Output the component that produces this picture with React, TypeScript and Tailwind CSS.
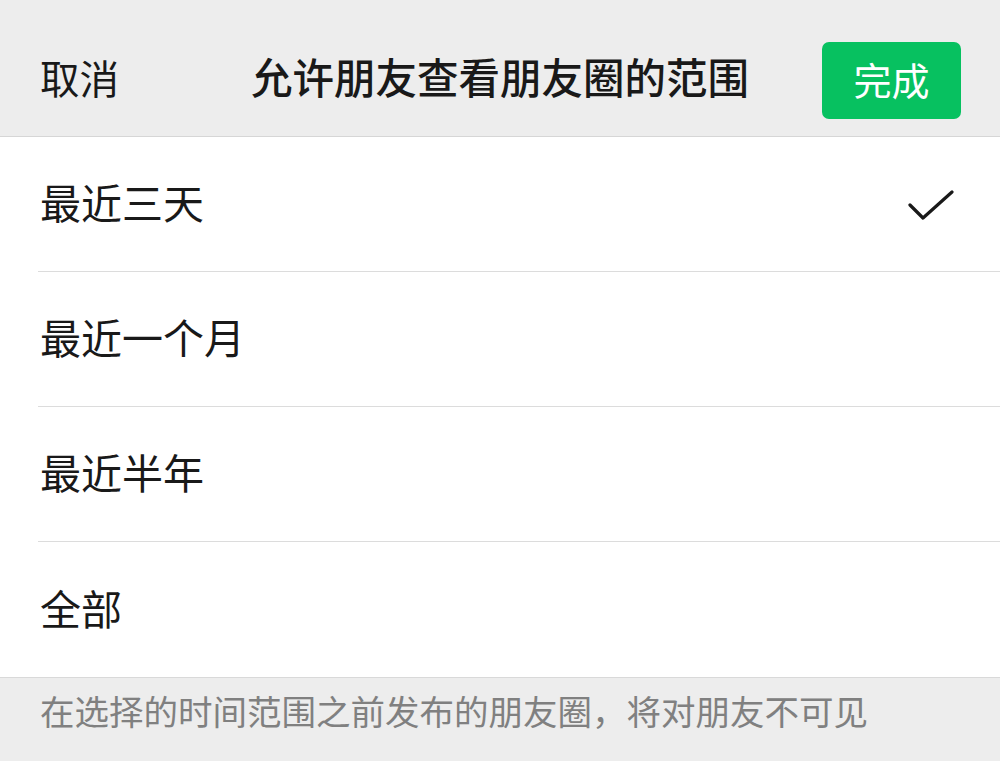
const options = ["最近三天", "最近一个月", "最近半年", "全部"];

const App: React.FC = () => {
  const selected = 0;

  return (
    <div
      className="w-[1000px] h-[761px] flex flex-col bg-[#ededed] text-[#191919] overflow-hidden"
      style={{ fontFamily: '"Noto Sans CJK SC", "Noto Sans", sans-serif' }}
    >
      {/* header */}
      <div className="h-[137px] pt-[25px] border-b border-[#d6d6d6] px-[40px] relative">
        <div className="flex items-center w-full justify-between h-full">
          <span className="text-[39.5px] leading-none mb-[8px]">取消</span>
          <button className="w-[139px] h-[77px] mr-[-1px] rounded-[7px] bg-[#07c160] text-white text-[38px] leading-none pb-[4px]">
            完成
          </button>
        </div>
        <div className="absolute left-0 right-0 top-[25px] bottom-0 pb-[8px] flex items-center justify-center pointer-events-none">
          <span className="text-[41.5px] leading-none font-medium">允许朋友查看朋友圈的范围</span>
        </div>
      </div>

      {/* options */}
      <div className="bg-white">
        {options.map((label, i) => (
          <div key={label} className="pl-[38px]">
            <div
              className={
                "h-[135px] flex items-center justify-between pr-[46px] " +
                (i < options.length - 1 ? "border-b border-[#dcdcdc]" : "")
              }
            >
              <span className="text-[41px] leading-none pl-[2px] mb-[5px]">{label}</span>
              {i === selected && (
                <svg width="46" height="32" viewBox="0 0 46 32" className="mt-[3px]">
                  <path
                    d="M2 15 L15 28 L44 2"
                    fill="none"
                    stroke="#191919"
                    strokeWidth="3.2"
                    strokeLinecap="round"
                    strokeLinejoin="round"
                  />
                </svg>
              )}
            </div>
          </div>
        ))}
      </div>

      {/* footer */}
      <div className="flex-1 border-t border-[#d9d9d9] px-[40px] pt-[12px]">
        <p className="text-[34.5px] leading-[40px] text-[#808080]">
          在选择的时间范围之前发布的朋友圈，将对朋友不可见
        </p>
      </div>
    </div>
  );
};

export default App;
